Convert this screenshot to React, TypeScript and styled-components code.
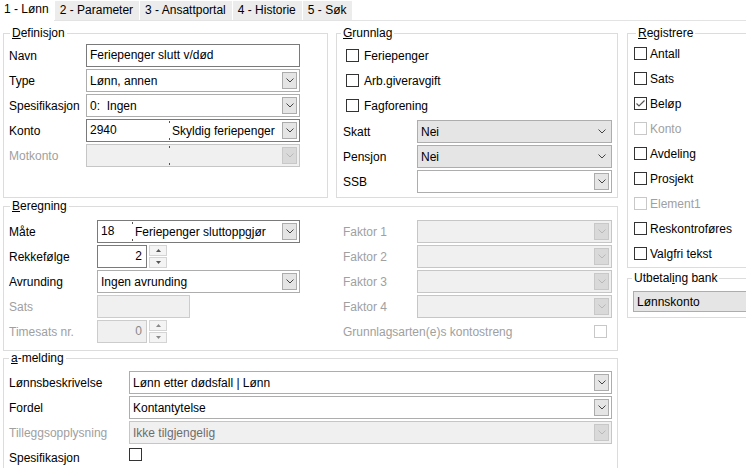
import React from 'react';
import styled, { createGlobalStyle } from 'styled-components';

const GlobalStyle = createGlobalStyle`
    html, body {
        margin: 0;
        padding: 0;
        background: #fff;
    }
    body {
        font-family: "Liberation Sans", Arial, sans-serif;
        font-size: 12px;
        color: #000;
    }
`;

const Window = styled.div`
    width: 746px;
    height: 468px;
    overflow: hidden;
    background: #fff;
`;

const TabBar = styled.div`
    display: flex;
    align-items: flex-end;
    height: 20px;
    border-bottom: 1px solid #e3e3e3;
`;

const Tab = styled.div<{ $active?: boolean }>`
    height: ${(p) => (p.$active ? 21 : 19)}px;
    line-height: 19px;
    margin-bottom: ${(p) => (p.$active ? -1 : 0)}px;
    padding: ${(p) => (p.$active ? '0 5px 2px 3px' : '0 6px 0 5px')};
    box-sizing: border-box;
    background: ${(p) => (p.$active ? '#fff' : '#ececec')};
    border-left: 1px solid #fff;
    white-space: nowrap;
`;

const Body = styled.div`
    display: flex;
    gap: 9px;
    margin-top: 5px;
    padding-left: 3px;
`;

const MainColumn = styled.div`
    width: 615px;
    flex: none;
    display: flex;
    flex-direction: column;
`;

const TopRow = styled.div`
    display: flex;
    gap: 8px;
`;

const SideColumn = styled.div`
    width: 130px;
    flex: none;
    display: flex;
    flex-direction: column;
    gap: 3px;
`;

const Group = styled.fieldset<{ $w: number; $h: number; $gapTop?: number }>`
    margin: ${(p) => p.$gapTop ?? 0}px 0 0 0;
    padding: 0;
    width: ${(p) => p.$w}px;
    height: ${(p) => p.$h}px;
    min-width: 0;
    box-sizing: border-box;
    border: 1px solid #dcdcdc;
    flex: none;
`;

const Legend = styled.legend<{ $inset: number }>`
    margin-left: ${(p) => p.$inset}px;
    padding: 0 2px;
    font-size: 12px;
    line-height: 14px;
`;

const FormGrid = styled.div<{ $cols: string; $pad: string }>`
    display: grid;
    grid-template-columns: ${(p) => p.$cols};
    grid-auto-rows: 23px;
    row-gap: 2px;
    align-items: center;
    padding: ${(p) => p.$pad};
`;

const Label = styled.div<{ $disabled?: boolean }>`
    color: ${(p) => (p.$disabled ? '#a0a0a0' : '#000')};
    white-space: nowrap;
`;

type Tone = 'text' | 'list' | 'disabled' | 'flat';

const toneBorder: Record<Tone, string> = {
    text: '#7a7a7a',
    list: '#adadad',
    disabled: '#c6c6c6',
    flat: '#adadad',
};

const toneBg: Record<Tone, string> = {
    text: '#fff',
    list: '#fff',
    disabled: '#f0f0f0',
    flat: '#e5e5e5',
};

const ComboBox = styled.div<{ $tone: Tone; $w?: number; $h?: number }>`
    display: flex;
    align-items: center;
    width: ${(p) => (p.$w ? `${p.$w}px` : '100%')};
    height: ${(p) => p.$h ?? 23}px;
    box-sizing: border-box;
    padding-left: 3px;
    border: 1px solid ${(p) => toneBorder[p.$tone]};
    background: ${(p) => toneBg[p.$tone]};
`;

const ComboCode = styled.div<{ $w: number; $disabled?: boolean }>`
    position: relative;
    width: ${(p) => p.$w}px;
    height: 100%;
    line-height: 21px;
    flex: none;
    color: ${(p) => (p.$disabled ? '#888' : '#000')};
    &::before,
    &::after {
        content: '';
        position: absolute;
        right: 0;
        width: 1px;
        height: 2px;
        background: #555;
    }
    &::before {
        top: 1px;
    }
    &::after {
        bottom: 1px;
    }
`;

const ComboText = styled.div<{ $disabled?: boolean; $pad?: number }>`
    flex: 1;
    min-width: 0;
    padding-left: ${(p) => p.$pad ?? 0}px;
    overflow: hidden;
    white-space: pre;
    color: ${(p) => (p.$disabled ? '#6d6d6d' : '#000')};
`;

const DropButton = styled.div<{ $disabled?: boolean }>`
    width: 15px;
    height: 17px;
    margin-right: 2px;
    box-sizing: border-box;
    flex: none;
    display: flex;
    align-items: center;
    justify-content: center;
    border: 1px solid ${(p) => (p.$disabled ? '#c8c8c8' : '#acacac')};
    background: ${(p) => (p.$disabled ? '#d9d9d9' : '#e5e5e5')};
`;

const FlatArrow = styled.div`
    flex: none;
    display: flex;
    margin-right: 5px;
`;

const Chevron = ({ color = '#444' }: { color?: string }) => (
    <svg width="8" height="5" viewBox="0 0 8 5">
        <polyline points="0.5,0.5 4,4 7.5,0.5" fill="none" stroke={color} strokeWidth="1" />
    </svg>
);

interface ComboProps {
    tone?: Tone;
    code?: string;
    codeWidth?: number;
    value?: string;
    width?: number;
    height?: number;
    arrow?: boolean;
}

const Combo = ({ tone = 'list', code, codeWidth = 32, value, width, height, arrow = true }: ComboProps) => {
    const disabled = tone === 'disabled';
    return (
        <ComboBox $tone={tone} $w={width} $h={height}>
            {code !== undefined && (
                <ComboCode $w={codeWidth} $disabled={disabled}>
                    {code}
                </ComboCode>
            )}
            <ComboText $disabled={disabled} $pad={code !== undefined ? 2 : 0}>
                {value}
            </ComboText>
            {arrow &&
                (tone === 'flat' ? (
                    <FlatArrow>
                        <Chevron />
                    </FlatArrow>
                ) : (
                    <DropButton $disabled={disabled}>
                        <Chevron color={disabled ? '#b8b8b8' : '#444'} />
                    </DropButton>
                ))}
        </ComboBox>
    );
};

const SpinWrap = styled.div`
    display: flex;
    gap: 2px;
    height: 23px;
`;

const SpinField = styled.div<{ $disabled?: boolean }>`
    width: 50px;
    height: 23px;
    box-sizing: border-box;
    padding-right: 4px;
    text-align: right;
    line-height: 21px;
    border: 1px solid ${(p) => (p.$disabled ? '#cccccc' : '#7a7a7a')};
    background: ${(p) => (p.$disabled ? '#f0f0f0' : '#fff')};
    color: ${(p) => (p.$disabled ? '#888' : '#000')};
`;

const SpinArrows = styled.div`
    display: flex;
    flex-direction: column;
    gap: 1px;
`;

const SpinButton = styled.div`
    width: 18px;
    height: 11px;
    box-sizing: border-box;
    display: flex;
    align-items: center;
    justify-content: center;
    border: 1px solid #d4d4d4;
    background: #f4f4f4;
`;

const Triangle = ({ up, color }: { up?: boolean; color: string }) => (
    <svg width="5" height="3" viewBox="0 0 5 3">
        <polygon points={up ? '0,3 2.5,0 5,3' : '0,0 2.5,3 5,0'} fill={color} />
    </svg>
);

const Spinner = ({ value, disabled }: { value: string; disabled?: boolean }) => (
    <SpinWrap>
        <SpinField $disabled={disabled}>{value}</SpinField>
        <SpinArrows>
            <SpinButton>
                <Triangle up color={disabled ? '#8a8a8a' : '#555'} />
            </SpinButton>
            <SpinButton>
                <Triangle color={disabled ? '#8a8a8a' : '#555'} />
            </SpinButton>
        </SpinArrows>
    </SpinWrap>
);

const Box = styled.div<{ $disabled?: boolean; $start?: boolean }>`
    width: 13px;
    height: 13px;
    box-sizing: border-box;
    flex: none;
    border: 1px solid ${(p) => (p.$disabled ? '#c8c8c8' : '#333')};
    background: #fff;
    display: flex;
    align-items: center;
    justify-content: center;
    align-self: ${(p) => (p.$start ? 'start' : 'auto')};
    margin-top: ${(p) => (p.$start ? 2 : 0)}px;
`;

const CheckBox = ({ checked, disabled, start }: { checked?: boolean; disabled?: boolean; start?: boolean }) => (
    <Box $disabled={disabled} $start={start}>
        {checked && (
            <svg width="11" height="11" viewBox="0 0 11 11">
                <polyline points="1.5,5.5 4,8 9.5,2.5" fill="none" stroke="#555" strokeWidth="1.2" />
            </svg>
        )}
    </Box>
);

const CheckRow = styled.div<{ $h: number; $gap: number; $indent?: number; $disabled?: boolean }>`
    display: flex;
    align-items: center;
    height: ${(p) => p.$h}px;
    gap: ${(p) => p.$gap}px;
    padding-left: ${(p) => p.$indent ?? 0}px;
    color: ${(p) => (p.$disabled ? '#a0a0a0' : '#000')};
    white-space: nowrap;
`;

const TextBox = styled.div`
    height: 23px;
    box-sizing: border-box;
    padding-left: 3px;
    line-height: 21px;
    border: 1px solid #7a7a7a;
    background: #fff;
`;

const FlatBox = styled.div<{ $w: number }>`
    width: ${(p) => p.$w}px;
    height: 23px;
    box-sizing: border-box;
    border: 1px solid #cccccc;
    background: #f0f0f0;
`;

const CheckList = styled.div<{ $pad: string }>`
    display: flex;
    flex-direction: column;
    padding: ${(p) => p.$pad};
`;

const StreamRow = styled.div`
    grid-column: 3 / 5;
    display: flex;
    align-items: center;
    justify-content: space-between;
    padding-right: 5px;
`;

const registrere: { label: string; checked?: boolean; disabled?: boolean }[] = [
    { label: 'Antall' },
    { label: 'Sats' },
    { label: 'Beløp', checked: true },
    { label: 'Konto', disabled: true },
    { label: 'Avdeling' },
    { label: 'Prosjekt' },
    { label: 'Element1', disabled: true },
    { label: 'Reskontroføres' },
    { label: 'Valgfri tekst' },
];

export default function App() {
    return (
        <Window>
            <GlobalStyle />
            <TabBar>
                <Tab $active>1 - Lønn</Tab>
                <Tab>2 - Parameter</Tab>
                <Tab>3 - Ansattportal</Tab>
                <Tab>4 - Historie</Tab>
                <Tab>5 - Søk</Tab>
            </TabBar>
            <Body>
                <MainColumn>
                    <TopRow>
                        <Group $w={325} $h={172}>
                            <Legend $inset={6}>
                                <u>D</u>efinisjon
                            </Legend>
                            <FormGrid $cols="77px 214px" $pad="4px 0 0 5px">
                                <Label>Navn</Label>
                                <TextBox>Feriepenger slutt v/død</TextBox>
                                <Label>Type</Label>
                                <Combo value="Lønn, annen" />
                                <Label>Spesifikasjon</Label>
                                <Combo value="0:  Ingen" />
                                <Label>Konto</Label>
                                <Combo tone="text" code="2940" codeWidth={80} value="Skyldig feriepenger" />
                                <Label $disabled>Motkonto</Label>
                                <Combo tone="disabled" code="" codeWidth={80} value="" />
                            </FormGrid>
                        </Group>
                        <Group $w={282} $h={172}>
                            <Legend $inset={4}>
                                <u>G</u>runnlag
                            </Legend>
                            <CheckList $pad="3px 0 0 9px">
                                <CheckRow $h={25} $gap={5}>
                                    <CheckBox />
                                    Feriepenger
                                </CheckRow>
                                <CheckRow $h={25} $gap={5}>
                                    <CheckBox />
                                    Arb.giveravgift
                                </CheckRow>
                                <CheckRow $h={25} $gap={5}>
                                    <CheckBox />
                                    Fagforening
                                </CheckRow>
                            </CheckList>
                            <FormGrid $cols="74px 195px" $pad="2px 0 0 6px">
                                <Label>Skatt</Label>
                                <Combo tone="flat" value="Nei" />
                                <Label>Pensjon</Label>
                                <Combo tone="flat" value="Nei" />
                                <Label>SSB</Label>
                                <Combo value="" />
                            </FormGrid>
                        </Group>
                    </TopRow>
                    <Group $w={615} $h={152} $gapTop={1}>
                        <Legend $inset={6}>
                            <u>B</u>eregning
                        </Legend>
                        <FormGrid $cols="88px 246px 74px 195px" $pad="7px 0 0 5px">
                            <Label>Måte</Label>
                            <Combo tone="text" code="18" codeWidth={32} value="Feriepenger sluttoppgjør" width={203} />
                            <Label $disabled>Faktor 1</Label>
                            <Combo tone="disabled" />
                            <Label>Rekkefølge</Label>
                            <Spinner value="2" />
                            <Label $disabled>Faktor 2</Label>
                            <Combo tone="disabled" />
                            <Label>Avrunding</Label>
                            <Combo value="Ingen avrunding" width={203} />
                            <Label $disabled>Faktor 3</Label>
                            <Combo tone="disabled" />
                            <Label $disabled>Sats</Label>
                            <FlatBox $w={93} />
                            <Label $disabled>Faktor 4</Label>
                            <Combo tone="disabled" />
                            <Label $disabled>Timesats nr.</Label>
                            <Spinner value="0" disabled />
                            <StreamRow>
                                <Label $disabled>Grunnlagsarten(e)s kontostreng</Label>
                                <CheckBox disabled />
                            </StreamRow>
                        </FormGrid>
                    </Group>
                    <Group $w={615} $h={125}>
                        <Legend $inset={5}>
                            <u>a</u>-melding
                        </Legend>
                        <FormGrid $cols="120px 483px" $pad="6px 0 0 5px">
                            <Label>Lønnsbeskrivelse</Label>
                            <Combo value="Lønn etter dødsfall | Lønn" />
                            <Label>Fordel</Label>
                            <Combo value="Kontantytelse" />
                            <Label $disabled>Tilleggsopplysning</Label>
                            <Combo tone="disabled" value="Ikke tilgjengelig" />
                            <Label>Spesifikasjon</Label>
                            <CheckBox start />
                        </FormGrid>
                    </Group>
                </MainColumn>
                <SideColumn>
                    <Group $w={130} $h={242}>
                        <Legend $inset={8}>
                            <u>R</u>egistrere
                        </Legend>
                        <CheckList $pad="1px 0 0 6px">
                            {registrere.map((r) => (
                                <CheckRow key={r.label} $h={25} $gap={3} $disabled={r.disabled}>
                                    <CheckBox checked={r.checked} disabled={r.disabled} />
                                    {r.label}
                                </CheckRow>
                            ))}
                        </CheckList>
                    </Group>
                    <Group $w={130} $h={47}>
                        <Legend $inset={4}>
                            Utbetal<u>i</u>ng bank
                        </Legend>
                        <CheckList $pad="6px 0 0 5px">
                            <Combo tone="flat" value="Lønnskonto" width={125} height={21} arrow={false} />
                        </CheckList>
                    </Group>
                </SideColumn>
            </Body>
        </Window>
    );
}
